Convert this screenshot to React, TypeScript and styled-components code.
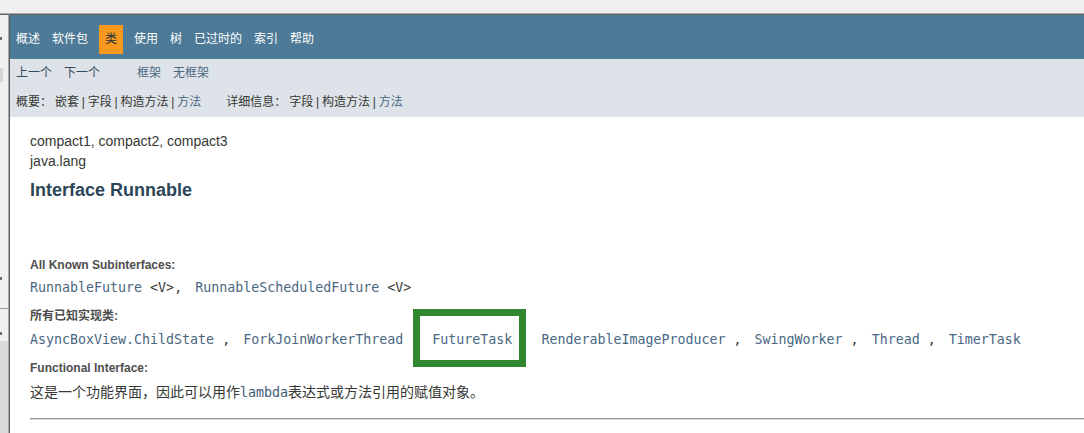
import React from "react";
import styled, { createGlobalStyle } from "styled-components";

const Global = createGlobalStyle`
  html, body { margin: 0; padding: 0; }
  body {
    background: #f0f0f0;
    font-family: "Liberation Sans", "Noto Sans CJK SC", sans-serif;
  }
`;

const MONO = `"DejaVu Sans Mono", "Liberation Mono", "Noto Sans CJK SC", monospace`;

const Screen = styled.div`
  width: 1084px;
  height: 433px;
  overflow: hidden;
  display: flex;
  flex-direction: column;
  background: #f0f0f0;
`;

const TopStrip = styled.div`
  flex: none;
  height: 13px;
  background: #f0f0f0;
  border-bottom: 1px solid #a9a9a9;
`;

const Main = styled.div`
  flex: 1;
  display: flex;
  min-height: 0;
  border-top: 1px solid #646464;
`;

const LeftStrip = styled.div`
  flex: none;
  width: 8px;
  background: #f0f0f0;
  border-right: 1px solid #a9a9a9;
  position: relative;
`;

const StripMark = styled.div<{ $top: number; $h: number; $w: number; $c: string }>`
  position: absolute;
  left: 0;
  top: ${(p) => p.$top}px;
  width: ${(p) => p.$w}px;
  height: ${(p) => p.$h}px;
  background: ${(p) => p.$c};
`;

const Page = styled.div`
  flex: 1;
  min-width: 0;
  background: #ffffff;
  border-left: 1px solid #5e5e5e;
  display: flex;
  flex-direction: column;
`;

const TopNav = styled.div`
  flex: none;
  background: #4d7a97;
  padding-top: 10px;
  height: 34px;
  font-size: 12px;
  color: #ffffff;
`;

const NavList = styled.ul`
  display: flex;
  margin: 0;
  padding: 0;
  list-style: none;
`;

const NavItem = styled.li<{ $active?: boolean }>`
  padding: 5px 6px;
  line-height: 19px;
  white-space: nowrap;
  background: ${(p) => (p.$active ? "#f8981d" : "transparent")};
  color: ${(p) => (p.$active ? "#253441" : "#ffffff")};
  margin: ${(p) => (p.$active ? "0 5px" : "0")};
`;

const SubNav = styled.div`
  flex: none;
  background: #dee3e9;
  font-size: 12px;
`;

const SubRow = styled.div`
  display: flex;
`;

const SubList = styled.ul`
  display: flex;
  margin: 0 25px 0 0;
  padding: 0;
  list-style: none;
`;

const SubItem = styled.li<{ $link?: boolean }>`
  padding: 5px 6px;
  line-height: 19px;
  white-space: nowrap;
  color: ${(p) => (p.$link ? "#4a6782" : "#34495c")};
`;

const SummaryRow = styled.div`
  display: flex;
  padding: 5px 0 5px 6px;
  line-height: 19px;
  color: #353833;
  white-space: nowrap;
`;

const SummaryGroup = styled.span`
  margin-right: 25px;
`;

const Label = styled.span`
  margin-right: 3px;
`;

const Pipe = styled.span`
  margin: 0 2.8px;
`;

const SummaryLink = styled.span`
  color: #4a6782;
`;

const Content = styled.div`
  padding: 14px 0 0 20px;
  color: #353833;
`;

const Line = styled.div`
  font-size: 14px;
  line-height: 20px;
`;

const Title = styled.h2`
  margin: 8px 0 0;
  font-size: 18px;
  line-height: 22px;
  font-weight: bold;
  color: #2c4557;
`;

const DefList = styled.dl`
  margin: 56px 0 0;
`;

const DefTerm = styled.dt<{ $gap: number }>`
  margin-top: ${(p) => p.$gap}px;
  font-size: 12px;
  line-height: 16px;
  font-weight: bold;
  color: #4e4e4e;
`;

const DefDesc = styled.dd<{ $gap: number }>`
  margin: ${(p) => p.$gap}px 0 0;
  font-family: ${MONO};
  font-size: 13.3px;
  line-height: 20px;
  white-space: pre;
  color: #353833;
`;

const Link = styled.span`
  color: #4a6782;
`;

const Sep = styled.span`
  margin-right: 5px;
`;

const Highlight = styled.span`
  position: relative;
  &::after {
    content: "";
    position: absolute;
    left: -19px;
    top: -23px;
    width: 113px;
    height: 58px;
    box-sizing: border-box;
    border: 7px solid #31872f;
  }
`;

const Sentence = styled.dd`
  margin: 6px 0 0;
  font-size: 14px;
  line-height: 20px;
  color: #353833;
  white-space: nowrap;
`;

const Code = styled.code`
  font-family: ${MONO};
  font-size: 13.3px;
  color: #3d5a78;
`;

const Rule = styled.hr`
  margin: 15px 0 0;
  border: none;
  border-top: 1px solid #9c9c9c;
  border-bottom: 1px solid #d4d4d4;
  height: 0;
`;

const navItems = ["概述", "软件包", "类", "使用", "树", "已过时的", "索引", "帮助"];

const impls = [
  "AsyncBoxView.ChildState",
  "ForkJoinWorkerThread",
  "FutureTask",
  "RenderableImageProducer",
  "SwingWorker",
  "Thread",
  "TimerTask",
];

function Pipes({ items, last }: { items: string[]; last: string }) {
  return (
    <>
      {items.map((t) => (
        <React.Fragment key={t}>
          {t}
          <Pipe>|</Pipe>
        </React.Fragment>
      ))}
      <SummaryLink>{last}</SummaryLink>
    </>
  );
}

export default function App() {
  return (
    <>
      <Global />
      <Screen>
        <TopStrip />
        <Main>
          <LeftStrip>
            <StripMark $top={22} $h={3} $w={2} $c="#6f6f6f" />
            <StripMark $top={53} $h={14} $w={3} $c="#d6d6d6" />
            <StripMark $top={262} $h={3} $w={2} $c="#6f6f6f" />
            <StripMark $top={293} $h={1} $w={8} $c="#9a9a9a" />
            <StripMark $top={317} $h={3} $w={2} $c="#6f6f6f" />
            <StripMark $top={326} $h={120} $w={8} $c="#dadada" />
          </LeftStrip>
          <Page>
            <TopNav>
              <NavList>
                {navItems.map((n) => (
                  <NavItem key={n} $active={n === "类"}>
                    {n}
                  </NavItem>
                ))}
              </NavList>
            </TopNav>
            <SubNav>
              <SubRow>
                <SubList>
                  <SubItem>上一个</SubItem>
                  <SubItem>下一个</SubItem>
                </SubList>
                <SubList>
                  <SubItem $link>框架</SubItem>
                  <SubItem $link>无框架</SubItem>
                </SubList>
              </SubRow>
              <SummaryRow>
                <SummaryGroup>
                  <Label>概要：</Label>
                  <Pipes items={["嵌套", "字段", "构造方法"]} last="方法" />
                </SummaryGroup>
                <SummaryGroup>
                  <Label>详细信息：</Label>
                  <Pipes items={["字段", "构造方法"]} last="方法" />
                </SummaryGroup>
              </SummaryRow>
            </SubNav>
            <Content>
              <Line>compact1, compact2, compact3</Line>
              <Line>java.lang</Line>
              <Title>Interface Runnable</Title>
              <DefList>
                <DefTerm $gap={0}>All Known Subinterfaces:</DefTerm>
                <DefDesc $gap={5}>
                  <Link>RunnableFuture</Link> {"<V>"},<Sep> </Sep>
                  <Link>RunnableScheduledFuture</Link> {"<V>"}
                </DefDesc>
                <DefTerm $gap={10}>所有已知实现类:</DefTerm>
                <DefDesc $gap={6}>
                  {impls.map((name, i) => (
                    <React.Fragment key={name}>
                      {name === "FutureTask" ? (
                        <Highlight>
                          <Link>{name}</Link>
                        </Highlight>
                      ) : (
                        <Link>{name}</Link>
                      )}
                      {i < impls.length - 1 && <Sep> , </Sep>}
                    </React.Fragment>
                  ))}
                </DefDesc>
                <DefTerm $gap={10}>Functional Interface:</DefTerm>
                <Sentence>
                  这是一个功能界面，因此可以用作<Code>lambda</Code>表达式或方法引用的赋值对象。
                </Sentence>
              </DefList>
              <Rule />
            </Content>
          </Page>
        </Main>
      </Screen>
    </>
  );
}
